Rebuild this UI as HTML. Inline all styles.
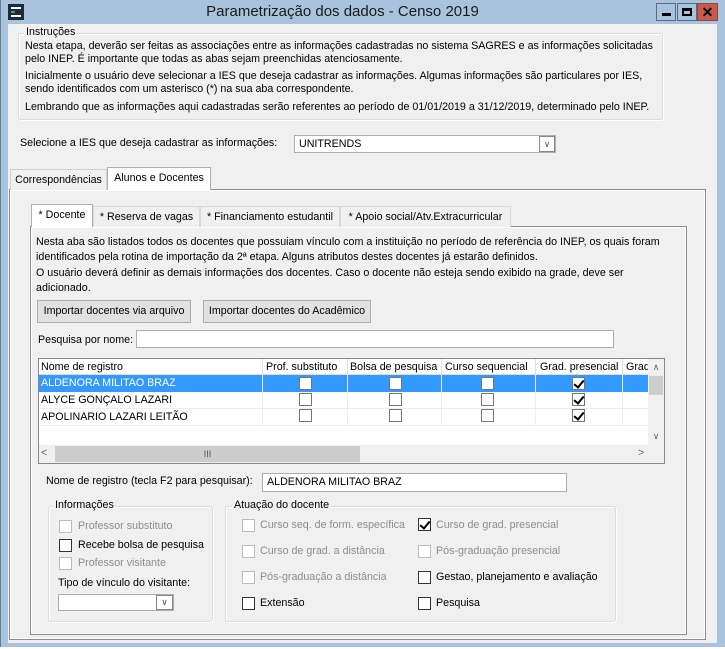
<!DOCTYPE html>
<html><head><meta charset="utf-8"><style>
*{box-sizing:border-box;margin:0;padding:0}
body{width:725px;height:649px;overflow:hidden;background:#fff;font-family:"Liberation Sans",Tahoma,sans-serif;font-size:10.7px;color:#000;position:relative}
.a{position:absolute;white-space:nowrap}
.win{position:absolute;left:0;top:0;width:725px;height:647px;background:#a9c2de;border-left:1px solid #6a7d94}
.client{position:absolute;left:8px;top:24px;width:709px;height:619px;background:#f0f0f0}
.grp{position:absolute;border:1px solid #dcdcdc;border-radius:3px;box-shadow:inset 1px 1px 0 #fff,1px 1px 0 #fff}
.inp{position:absolute;background:#fff;border:1px solid #abadb3;padding:2px 4px;line-height:13px}
.btn{position:absolute;background:#e1e1e1;border:1px solid #adadad;text-align:center;line-height:20px}
.cb{position:absolute;width:13px;height:13px;border:1px solid #333;background:#fff}
.cb.d{border-color:#bcbcbc}
.g{color:#8d8d8d}
.tab{position:absolute;border:1px solid #d9d9d9;border-bottom:none;background:#f0f0f0;text-align:center;line-height:20px}
.chk:after{content:"";position:absolute;left:3px;top:0px;width:4px;height:8px;border:solid #000;border-width:0 2px 2px 0;transform:rotate(40deg)}
</style></head><body>
<div class="win"></div>
<div class="a" style="left:8px;top:4px;width:16px;height:16px;background:#1d2a3b"></div>
<div class="a" style="left:11px;top:7px;width:10px;height:2px;background:#fff"></div>
<div class="a" style="left:11px;top:11px;width:4px;height:2px;background:#2fb34a"></div>
<div class="a" style="left:11px;top:15px;width:10px;height:2px;background:#fff"></div>
<div class="a" style="left:0;top:3px;width:685px;text-align:center;font-size:15px;color:#1a1a1a">Parametrização dos dados - Censo 2019</div>
<div class="a" style="left:656px;top:3px;width:20px;height:18px;border:1px solid #5a6c86;background:#a9c2de"><div class="a" style="left:5px;top:9px;width:9px;height:3px;background:#000"></div></div>
<div class="a" style="left:677px;top:3px;width:20px;height:18px;border:1px solid #5a6c86;background:#a9c2de"><div class="a" style="left:4px;top:4px;width:10px;height:8px;border:2px solid #000;border-top-width:3px"></div></div>
<div class="a" style="left:697px;top:3px;width:21px;height:18px;border:1px solid #8a4a40;background:#c75a4a;text-align:center;font-weight:bold;font-size:14px;line-height:16px">✕</div>

<div class="client"></div>
<div class="grp" style="left:18px;top:33px;width:645px;height:87px"></div>
<div class="a" style="left:24px;top:25px;background:#f0f0f0;padding:0 2px;line-height:15px">Instruções</div>
<div class="a" style="left:25px;top:40px;line-height:13px">Nesta etapa, deverão ser feitas as associações entre as informações cadastradas no sistema SAGRES e as informações solicitadas<br>pelo INEP. É importante que todas as abas sejam preenchidas atenciosamente.</div>
<div class="a" style="left:25px;top:70px;line-height:13px">Inicialmente o usuário deve selecionar a IES que deseja cadastrar as informações. Algumas informações são particulares por IES,<br>sendo identificados com um asterisco (*) na sua aba correspondente.</div>
<div class="a" style="left:25px;top:101px">Lembrando que as informações aqui cadastradas serão referentes ao período de 01/01/2019 a 31/12/2019, determinado pelo INEP.</div>
<div class="a" style="left:20px;top:137px">Selecione a IES que deseja cadastrar as informações:</div>
<div class="inp" style="left:294px;top:135px;width:262px;height:18px">UNITRENDS</div>
<div class="a" style="left:539px;top:136px;width:16px;height:16px;border:1px solid #888;background:#fff;text-align:center;font-size:9px;line-height:14px;color:#555">∨</div>

<div class="a" style="left:9px;top:189px;width:697px;height:451px;border:1px solid #8c8c8c;box-shadow:inset 0 0 0 1px #fff;background:#f0f0f0"></div>
<div class="tab" style="left:10px;top:169px;width:97px;height:21px;border-color:#d0d0d0">Correspondências</div>
<div class="tab" style="left:107px;top:167px;width:104px;height:23px;background:#fff;border-color:#b0b0b0">Alunos e Docentes</div>

<div class="a" style="left:30px;top:226px;width:657px;height:409px;border:1px solid #8c8c8c;box-shadow:inset 0 0 0 1px #fff;background:#f0f0f0"></div>
<div class="tab" style="left:31px;top:204px;width:62px;height:23px;background:#fff;border-color:#b0b0b0">* Docente</div>
<div class="tab" style="left:93px;top:206px;width:107px;height:21px">* Reserva de vagas</div>
<div class="tab" style="left:200px;top:206px;width:140px;height:21px">* Financiamento estudantil</div>
<div class="tab" style="left:340px;top:206px;width:171px;height:21px">* Apoio social/Atv.Extracurricular</div>

<div class="a" style="left:36px;top:235px;line-height:15px">Nesta aba são listados todos os docentes que possuiam vínculo com a instituição no período de referência do INEP, os quais foram<br>identificados pela rotina de importação da 2ª etapa. Alguns atributos destes docentes já estarão definidos.</div>
<div class="a" style="left:36px;top:266px;line-height:15px">O usuário deverá definir as demais informações dos docentes. Caso o docente não esteja sendo exibido na grade, deve ser<br>adicionado.</div>
<div class="btn" style="left:37px;top:300px;width:154px;height:23px">Importar docentes via arquivo</div>
<div class="btn" style="left:203px;top:300px;width:168px;height:23px">Importar docentes do Acadêmico</div>
<div class="a" style="left:38px;top:334px">Pesquisa por nome:</div>
<div class="inp" style="left:136px;top:330px;width:478px;height:18px"></div>

<div class="a" style="left:38px;top:358px;width:627px;height:106px;border:1px solid #828790;background:#fff"></div>
<div class="a" style="left:39px;top:359px;width:609px;height:16px;background:#fff;border-bottom:1px solid #e0e0e0"></div>
<div class="a" style="left:41px;top:361px">Nome de registro</div>
<div class="a" style="left:262px;top:359px;width:1px;height:16px;background:#e0e0e0"></div><div class="a" style="left:266px;top:361px">Prof. substituto</div>
<div class="a" style="left:347px;top:359px;width:1px;height:16px;background:#e0e0e0"></div><div class="a" style="left:350px;top:361px">Bolsa de pesquisa</div>
<div class="a" style="left:441px;top:359px;width:1px;height:16px;background:#e0e0e0"></div><div class="a" style="left:445px;top:361px">Curso sequencial</div>
<div class="a" style="left:535px;top:359px;width:1px;height:16px;background:#e0e0e0"></div><div class="a" style="left:540px;top:361px">Grad. presencial</div>
<div class="a" style="left:622px;top:359px;width:1px;height:16px;background:#e0e0e0"></div><div class="a" style="left:626px;top:361px;width:22px;overflow:hidden">Grad.</div>
<div class="a" style="left:39px;top:375px;width:609px;height:17px;background:#3399ff"></div>
<div class="a" style="left:41px;top:377px;color:#fff">ALDENORA MILITAO BRAZ</div>
<div class="a" style="left:41px;top:394px">ALYCE GONÇALO LAZARI</div>
<div class="a" style="left:41px;top:411px">APOLINARIO LAZARI LEITÃO</div>
<div class="a" style="left:39px;top:408px;width:609px;height:1px;background:#eee"></div>
<div class="a" style="left:39px;top:425px;width:609px;height:1px;background:#eee"></div>
<div class="a" style="left:262px;top:375px;width:1px;height:51px;background:#eee"></div>
<div class="a" style="left:347px;top:375px;width:1px;height:51px;background:#eee"></div>
<div class="a" style="left:441px;top:375px;width:1px;height:51px;background:#eee"></div>
<div class="a" style="left:535px;top:375px;width:1px;height:51px;background:#eee"></div>
<div class="a" style="left:622px;top:375px;width:1px;height:51px;background:#eee"></div>
<div class="cb" style="left:299px;top:377px;border-color:#777"></div><div class="cb" style="left:389px;top:377px;border-color:#777"></div><div class="cb" style="left:481px;top:377px;border-color:#777"></div><div class="cb chk" style="left:572px;top:377px;border-color:#777"></div>
<div class="cb" style="left:299px;top:393px;border-color:#777"></div><div class="cb" style="left:389px;top:393px;border-color:#777"></div><div class="cb" style="left:481px;top:393px;border-color:#777"></div><div class="cb chk" style="left:572px;top:393px;border-color:#777"></div>
<div class="cb" style="left:299px;top:409px;border-color:#777"></div><div class="cb" style="left:389px;top:409px;border-color:#777"></div><div class="cb" style="left:481px;top:409px;border-color:#777"></div><div class="cb chk" style="left:572px;top:409px;border-color:#777"></div>
<div class="a" style="left:648px;top:359px;width:16px;height:86px;background:#f0f0f0"></div>
<div class="a" style="left:648px;top:359px;width:16px;height:17px;text-align:center;font-size:9px;color:#666;line-height:17px">∧</div>
<div class="a" style="left:649px;top:376px;width:14px;height:19px;background:#cdcdcd"></div>
<div class="a" style="left:648px;top:428px;width:16px;height:17px;text-align:center;font-size:9px;color:#666;line-height:17px">∨</div>
<div class="a" style="left:39px;top:445px;width:609px;height:18px;background:#f0f0f0"></div>
<div class="a" style="left:41px;top:447px;color:#666">&lt;</div>
<div class="a" style="left:55px;top:446px;width:305px;height:16px;background:#cdcdcd;text-align:center;font-size:9px;line-height:16px;color:#555">III</div>
<div class="a" style="left:638px;top:447px;color:#666">&gt;</div>
<div class="a" style="left:648px;top:445px;width:16px;height:18px;background:#f0f0f0"></div>

<div class="a" style="left:46px;top:475px">Nome de registro (tecla F2 para pesquisar):</div>
<div class="inp" style="left:262px;top:473px;width:305px;height:19px">ALDENORA MILITAO BRAZ</div>

<div class="grp" style="left:48px;top:506px;width:165px;height:116px"></div>
<div class="a" style="left:53px;top:499px;background:#f0f0f0;padding:0 2px">Informações</div>
<div class="cb d" style="left:59px;top:520px"></div><div class="a g" style="left:78px;top:520px">Professor substituto</div>
<div class="cb" style="left:59px;top:539px"></div><div class="a" style="left:78px;top:539px">Recebe bolsa de pesquisa</div>
<div class="cb d" style="left:59px;top:557px"></div><div class="a g" style="left:78px;top:557px">Professor visitante</div>
<div class="a" style="left:58px;top:577px">Tipo de vínculo do visitante:</div>
<div class="inp" style="left:58px;top:594px;width:116px;height:17px"></div>
<div class="a" style="left:156px;top:595px;width:17px;height:15px;border:1px solid #888;background:#fff;text-align:center;font-size:9px;line-height:13px;color:#555">∨</div>

<div class="grp" style="left:225px;top:506px;width:391px;height:116px"></div>
<div class="a" style="left:232px;top:499px;background:#f0f0f0;padding:0 2px">Atuação do docente</div>
<div class="cb d" style="left:242px;top:519px"></div><div class="a g" style="left:260px;top:519px">Curso seq. de form. específica</div>
<div class="cb d" style="left:242px;top:545px"></div><div class="a g" style="left:260px;top:545px">Curso de grad. a distância</div>
<div class="cb d" style="left:242px;top:571px"></div><div class="a g" style="left:260px;top:571px">Pós-graduação a distância</div>
<div class="cb" style="left:242px;top:597px"></div><div class="a" style="left:260px;top:597px">Extensão</div>
<div class="cb chk" style="left:418px;top:518px"></div><div class="a g" style="left:436px;top:519px">Curso de grad. presencial</div>
<div class="cb d" style="left:418px;top:545px"></div><div class="a g" style="left:436px;top:545px">Pós-graduação presencial</div>
<div class="cb" style="left:418px;top:571px"></div><div class="a" style="left:436px;top:571px">Gestao, planejamento e avaliação</div>
<div class="cb" style="left:418px;top:597px"></div><div class="a" style="left:436px;top:597px">Pesquisa</div>
</body></html>
